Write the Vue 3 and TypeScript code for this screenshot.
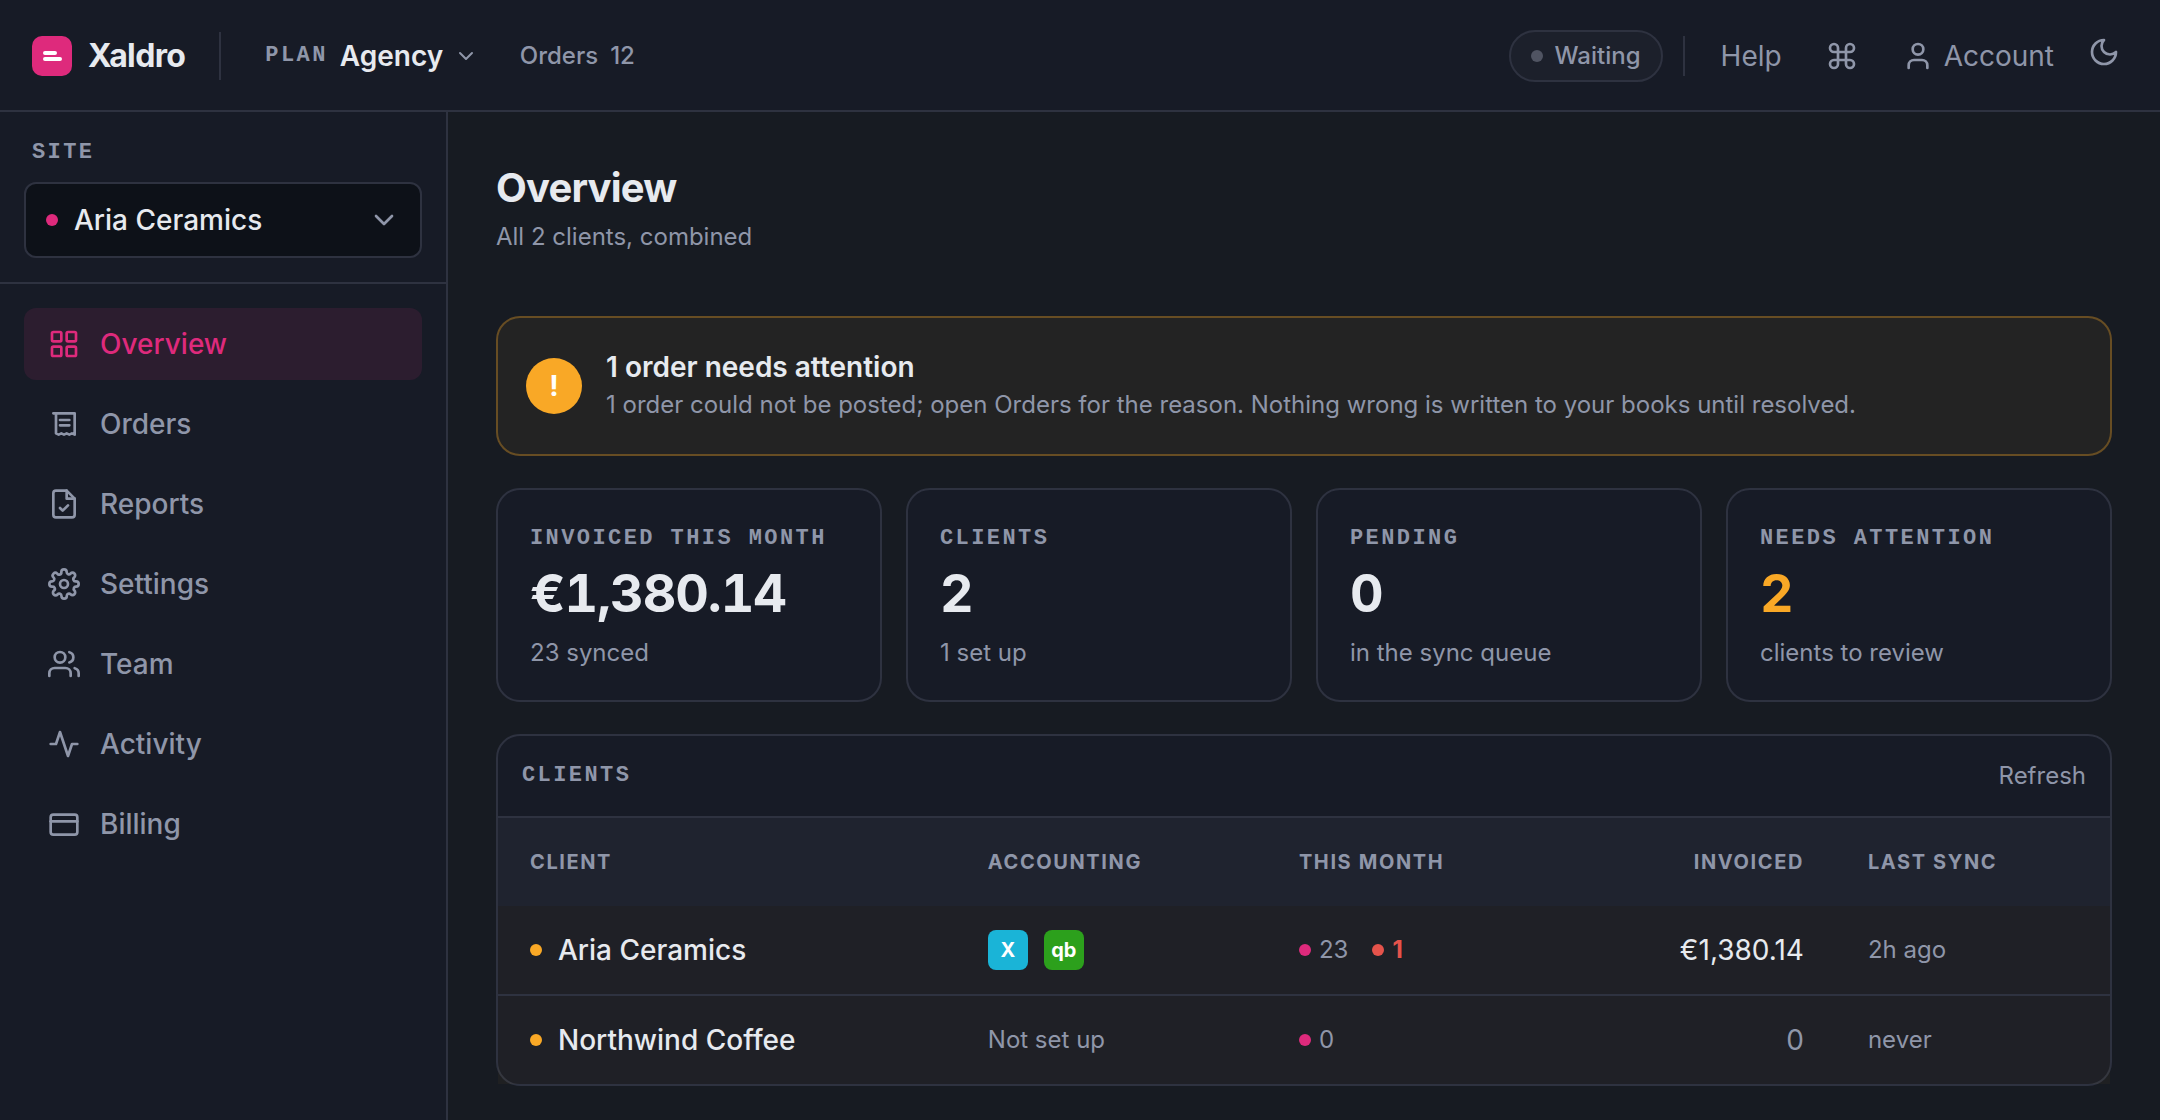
<script setup lang="ts">
import { ref } from 'vue'

interface Shape {
  tag: 'path' | 'rect' | 'circle'
  attrs: Record<string, string | number>
}
interface NavItem {
  label: string
  icon: Shape[]
}
interface Client {
  name: string
  books: { label: string; kind: string; title: string }[]
  synced: number
  failed: number
  invoiced: string
  lastSync: string
}

const p = (d: string): Shape => ({ tag: 'path', attrs: { d } })
const rect = (x: number, y: number, width: number, height: number, rx: number): Shape => ({
  tag: 'rect',
  attrs: { x, y, width, height, rx },
})
const circle = (cx: number, cy: number, r: number): Shape => ({ tag: 'circle', attrs: { cx, cy, r } })

const nav: NavItem[] = [
  { label: 'Overview', icon: [rect(3, 3, 7, 7, 1), rect(14, 3, 7, 7, 1), rect(3, 14, 7, 7, 1), rect(14, 14, 7, 7, 1)] },
  {
    label: 'Orders',
    icon: [p('M4 4h16v16l-2-1-2 1-2-1-2 1-2-1-2 1-2-1V4'), p('M9 9h7M9 13h7')],
  },
  {
    label: 'Reports',
    icon: [p('M14 2H6a2 2 0 0 0-2 2v16a2 2 0 0 0 2 2h12a2 2 0 0 0 2-2V8z'), p('M14 2v6h6'), p('m9 15 2 2 4-4')],
  },
  {
    label: 'Settings',
    icon: [
      circle(12, 12, 3),
      p('M19.4 15a1.65 1.65 0 0 0 .33 1.82l.06.06a2 2 0 1 1-2.83 2.83l-.06-.06a1.65 1.65 0 0 0-2.8 1.17V21a2 2 0 1 1-4 0v-.09a1.65 1.65 0 0 0-2.9-1.08l-.06.06a2 2 0 1 1-2.83-2.83l.06-.06A1.65 1.65 0 0 0 3.09 14H3a2 2 0 1 1 0-4h.09a1.65 1.65 0 0 0 1.08-2.9l-.06-.06a2 2 0 1 1 2.83-2.83l.06.06A1.65 1.65 0 0 0 10 3.09V3a2 2 0 1 1 4 0v.09a1.65 1.65 0 0 0 2.9 1.08l.06-.06a2 2 0 1 1 2.83 2.83l-.06.06A1.65 1.65 0 0 0 20.91 10H21a2 2 0 1 1 0 4h-.09a1.65 1.65 0 0 0-1.51 1z'),
    ],
  },
  {
    label: 'Team',
    icon: [p('M17 21v-2a4 4 0 0 0-4-4H5a4 4 0 0 0-4 4v2'), circle(9, 7, 4), p('M23 21v-2a4 4 0 0 0-3-3.87'), p('M16 3.13a4 4 0 0 1 0 7.75')],
  },
  { label: 'Activity', icon: [p('M22 12h-4l-3 9L9 3l-3 9H2')] },
  { label: 'Billing', icon: [rect(2, 5, 20, 15, 2), p('M2 10h20')] },
]

const stats = [
  { label: 'Invoiced this month', value: '€1,380.14', note: '23 synced', warn: false },
  { label: 'Clients', value: '2', note: '1 set up', warn: false },
  { label: 'Pending', value: '0', note: 'in the sync queue', warn: false },
  { label: 'Needs attention', value: '2', note: 'clients to review', warn: true },
]

const clients: Client[] = [
  {
    name: 'Aria Ceramics',
    books: [
      { label: 'X', kind: 'xero', title: 'Xero' },
      { label: 'qb', kind: 'quickbooks', title: 'QuickBooks' },
    ],
    synced: 23,
    failed: 1,
    invoiced: '€1,380.14',
    lastSync: '2h ago',
  },
  { name: 'Northwind Coffee', books: [], synced: 0, failed: 0, invoiced: '0', lastSync: 'never' },
]

const active = ref('Overview')
const site = ref('Aria Ceramics')
const plan = ref('Agency')
</script>

<template>
  <div class="app">
    <header class="topbar">
      <a class="brand" href="#">
        <svg class="logo" viewBox="0 0 40 40" aria-hidden="true">
          <rect width="40" height="40" rx="10" fill="#de2a7c" />
          <path d="M13 17h10M13 23h15" stroke="#fff" stroke-width="4" stroke-linecap="round" />
        </svg>
        <span>Xaldro</span>
      </a>
      <div class="plan">
        <label class="eyebrow" for="plan">Plan</label>
        <select id="plan" v-model="plan">
          <option>Agency</option>
        </select>
        <svg class="icon small" viewBox="0 0 24 24" aria-hidden="true"><path d="m6 9 6 6 6-6" /></svg>
      </div>
      <a class="orders" href="#"><span>Orders</span><span>12</span></a>

      <div class="tools">
        <span class="status"><i class="dot idle"></i>Waiting</span>
        <div class="links">
          <a href="#">Help</a>
          <button type="button" aria-label="Shortcuts">
            <svg class="icon" viewBox="0 0 24 24" aria-hidden="true">
              <path d="M18 3a3 3 0 0 0-3 3v12a3 3 0 1 0 3-3H6a3 3 0 1 0 3 3V6a3 3 0 1 0-3 3h12a3 3 0 0 0 0-6z" />
            </svg>
          </button>
          <a class="account" href="#">
            <svg class="icon" viewBox="0 0 24 24" aria-hidden="true">
              <path d="M19 21v-2a4 4 0 0 0-4-4H9a4 4 0 0 0-4 4v2" />
              <circle cx="12" cy="7" r="4" />
            </svg>
            <span>Account</span>
          </a>
          <button class="theme" type="button" aria-label="Theme">
            <svg class="icon" viewBox="0 0 24 24" aria-hidden="true">
              <path d="M12 3a6 6 0 0 0 9 9 9 9 0 1 1-9-9Z" />
            </svg>
          </button>
        </div>
      </div>
    </header>

    <div class="body">
      <aside class="sidebar">
        <div class="site">
          <label class="eyebrow" for="site">Site</label>
          <div class="picker">
            <i class="dot"></i>
            <select id="site" v-model="site">
              <option v-for="c in clients" :key="c.name">{{ c.name }}</option>
            </select>
            <svg class="icon" viewBox="0 0 24 24" aria-hidden="true"><path d="m6 9 6 6 6-6" /></svg>
          </div>
        </div>
        <nav>
          <a
            v-for="item in nav"
            :key="item.label"
            href="#"
            :class="{ active: active === item.label }"
            @click.prevent="active = item.label"
          >
            <svg class="icon" viewBox="0 0 24 24" aria-hidden="true">
              <component :is="s.tag" v-for="(s, i) in item.icon" :key="i" v-bind="s.attrs" />
            </svg>
            <span>{{ item.label }}</span>
          </a>
        </nav>
      </aside>

      <main>
        <h1>Overview</h1>
        <p class="subtitle">All 2 clients, combined</p>

        <section class="alert">
          <span class="mark">!</span>
          <div>
            <h2>1 order needs attention</h2>
            <p>1 order could not be posted; open Orders for the reason. Nothing wrong is written to your books until resolved.</p>
          </div>
        </section>

        <section class="stats">
          <article v-for="s in stats" :key="s.label" class="card">
            <h3 class="eyebrow">{{ s.label }}</h3>
            <strong :class="{ warn: s.warn }">{{ s.value }}</strong>
            <p>{{ s.note }}</p>
          </article>
        </section>

        <section class="panel">
          <header>
            <h2 class="eyebrow">Clients</h2>
            <button type="button">Refresh</button>
          </header>
          <table>
            <thead>
              <tr>
                <th class="c-client">Client</th>
                <th class="c-books">Accounting</th>
                <th class="c-month">This month</th>
                <th class="c-total num">Invoiced</th>
                <th>Last sync</th>
              </tr>
            </thead>
            <tbody>
              <tr v-for="c in clients" :key="c.name">
                <td>
                  <div class="client"><i class="dot amber"></i><span>{{ c.name }}</span></div>
                </td>
                <td>
                  <div v-if="c.books.length" class="books">
                    <abbr v-for="b in c.books" :key="b.label" :class="b.kind" :title="b.title">{{ b.label }}</abbr>
                  </div>
                  <template v-else>Not set up</template>
                </td>
                <td>
                  <div class="counts">
                    <span><i class="dot"></i>{{ c.synced }}</span>
                    <b v-if="c.failed"><i class="dot red"></i>{{ c.failed }}</b>
                  </div>
                </td>
                <td class="num total" :class="{ filled: c.synced > 0 }">{{ c.invoiced }}</td>
                <td>{{ c.lastSync }}</td>
              </tr>
            </tbody>
          </table>
        </section>
      </main>
    </div>
  </div>
</template>

<style>
body {
  background: #171b22;
}
</style>

<style scoped>
.app {
  --pink: #de2a7c;
  --amber: #f9a826;
  --text: #e7eaef;
  --muted: #8f96a9;
  --line: #2e3240;
  --surface: #171b26;
  --page: #171b22;
  display: flex;
  flex-direction: column;
  min-height: 100vh;
  background: var(--page);
  color: var(--muted);
  font-family: Inter, "Liberation Sans", sans-serif;
  font-size: 24px;
  line-height: 34px;
}
.app *,
.app {
  box-sizing: border-box;
}
h1, h2, h3, p {
  margin: 0;
}
a {
  color: inherit;
  text-decoration: none;
}
button {
  padding: 0;
  border: 0;
  background: none;
  color: inherit;
  font: inherit;
  cursor: pointer;
}
select {
  appearance: none;
  min-width: 0;
  padding: 0;
  border: 0;
  outline: 0;
  background: transparent;
  color: var(--text);
  font: inherit;
}
.icon {
  display: block;
  flex: none;
  width: 32px;
  height: 32px;
  fill: none;
  stroke: currentColor;
  stroke-width: 2;
  stroke-linecap: round;
  stroke-linejoin: round;
}
.icon.small {
  width: 24px;
  height: 24px;
}
.dot {
  flex: none;
  width: 12px;
  height: 12px;
  border-radius: 50%;
  background: var(--pink);
}
.dot.idle { background: #505462; }
.dot.amber { background: var(--amber); }
.dot.red { background: #e5534b; }
.eyebrow {
  color: var(--muted);
  font-family: "Liberation Mono", monospace;
  font-size: 22px;
  font-weight: 700;
  line-height: 34px;
  letter-spacing: 0.11em;
  text-transform: uppercase;
}

/* top bar */
.topbar {
  display: flex;
  align-items: center;
  height: 112px;
  padding: 0 40px 0 32px;
  background: var(--surface);
  box-shadow: inset 0 -2px var(--line);
}
.brand {
  display: flex;
  align-items: center;
  gap: 16px;
  color: var(--text);
  font-size: 32px;
  font-weight: 700;
  letter-spacing: -0.02em;
}
.logo {
  width: 40px;
  height: 40px;
}
.plan {
  display: flex;
  align-items: center;
  height: 48px;
  margin-left: 34px;
  padding-left: 44px;
  border-left: 2px solid var(--line);
}
.plan select {
  margin: 0 10px 0 12px;
  font-size: 28px;
  font-weight: 600;
}
.orders {
  display: flex;
  gap: 12px;
  margin-left: 42px;
  font-weight: 500;
}
.tools {
  display: flex;
  align-items: center;
  gap: 20px;
  margin-left: auto;
}
.status {
  display: flex;
  align-items: center;
  gap: 12px;
  height: 52px;
  padding: 0 20px;
  border: 2px solid var(--line);
  border-radius: 26px;
  background: #1c202b;
  font-weight: 500;
}
.links {
  display: flex;
  align-items: center;
  gap: 44px;
  height: 40px;
  padding-left: 36px;
  border-left: 2px solid var(--line);
  font-size: 28px;
}
.account {
  display: flex;
  align-items: center;
  gap: 10px;
}
.theme {
  align-self: flex-start;
  margin-left: -10px;
}

/* sidebar */
.body {
  display: flex;
  flex: 1;
}
.sidebar {
  flex: none;
  width: 448px;
  border-right: 2px solid var(--line);
  background: var(--surface);
}
.site {
  padding: 24px;
  border-bottom: 2px solid var(--line);
}
.site .eyebrow {
  display: block;
  margin: 0 8px 12px;
}
.picker {
  display: flex;
  align-items: center;
  gap: 16px;
  height: 76px;
  padding: 0 20px;
  border: 2px solid var(--line);
  border-radius: 12px;
  background: #0d1118;
  font-size: 28px;
  font-weight: 500;
}
.picker select {
  flex: 1;
}
nav {
  display: flex;
  flex-direction: column;
  gap: 8px;
  padding: 24px;
}
nav a {
  display: flex;
  align-items: center;
  gap: 20px;
  height: 72px;
  padding: 0 24px;
  border-radius: 12px;
  font-size: 28px;
  font-weight: 500;
}
nav a.active {
  background: rgba(222, 42, 124, 0.11);
  color: var(--pink);
}

/* content */
main {
  flex: 1;
  min-width: 0;
  padding: 48px 48px 32px;
}
h1 {
  margin-bottom: 4px;
  color: var(--text);
  font-size: 40px;
  font-weight: 700;
  line-height: 56px;
  letter-spacing: -0.02em;
}
.subtitle {
  margin-bottom: 62px;
}
.alert {
  display: flex;
  align-items: center;
  gap: 24px;
  min-height: 140px;
  padding: 30px 28px 32px;
  border: 2px solid rgba(249, 168, 38, 0.32);
  border-radius: 24px;
  background: rgba(236, 178, 50, 0.06);
}
.mark {
  display: grid;
  flex: none;
  place-items: center;
  width: 56px;
  height: 56px;
  margin-top: 2px;
  border-radius: 50%;
  background: var(--amber);
  color: #fff;
  font-size: 28px;
  font-weight: 700;
}
.alert h2 {
  margin-bottom: 2px;
  color: var(--text);
  font-size: 28px;
  font-weight: 600;
  line-height: 38px;
}
.stats {
  display: grid;
  grid-template-columns: repeat(4, 1fr);
  gap: 24px;
  margin: 32px 0;
}
.card,
.panel {
  border: 2px solid var(--line);
  border-radius: 24px;
  background: var(--surface);
}
.card {
  padding: 32px 32px 30px;
}
.card strong {
  display: block;
  margin: 6px 0 10px;
  color: var(--text);
  font-size: 52px;
  font-weight: 700;
  font-variant-numeric: tabular-nums;
  line-height: 64px;
  letter-spacing: -0.02em;
}
.card strong.warn {
  color: var(--amber);
}
.panel header {
  display: flex;
  align-items: center;
  justify-content: space-between;
  height: 82px;
  padding: 0 24px;
  border-bottom: 2px solid var(--line);
}
table {
  width: 100%;
  border-spacing: 0;
  table-layout: fixed;
}
.c-client { width: 28.4%; }
.c-books { width: 19.3%; }
.c-month { width: 20%; }
.c-total { width: 15.3%; }
th,
td {
  height: 88px;
  padding: 0 32px;
  text-align: left;
}
th {
  background: #1f232f;
  font-size: 20px;
  font-weight: 700;
  letter-spacing: 0.08em;
  text-transform: uppercase;
}
td {
  background: rgba(236, 178, 50, 0.04);
}
tbody tr:not(:last-child) td {
  height: 90px;
  border-bottom: 2px solid var(--line);
}
.num {
  text-align: right;
}
.client,
.books,
.counts,
.counts span,
.counts b {
  display: flex;
  align-items: center;
}
.client {
  gap: 16px;
  color: var(--text);
  font-size: 28px;
  font-weight: 500;
}
.books {
  gap: 16px;
}
abbr {
  width: 40px;
  border-radius: 8px;
  color: #fff;
  font-size: 20px;
  font-weight: 700;
  line-height: 40px;
  text-align: center;
  text-decoration: none;
}
.xero { background: #1ab4d7; }
.quickbooks { background: #2ca01c; }
.counts {
  gap: 24px;
}
.counts span,
.counts b {
  gap: 8px;
}
.counts b {
  color: #e5534b;
}
.total {
  font-size: 28px;
}
.filled {
  color: var(--text);
}
</style>
